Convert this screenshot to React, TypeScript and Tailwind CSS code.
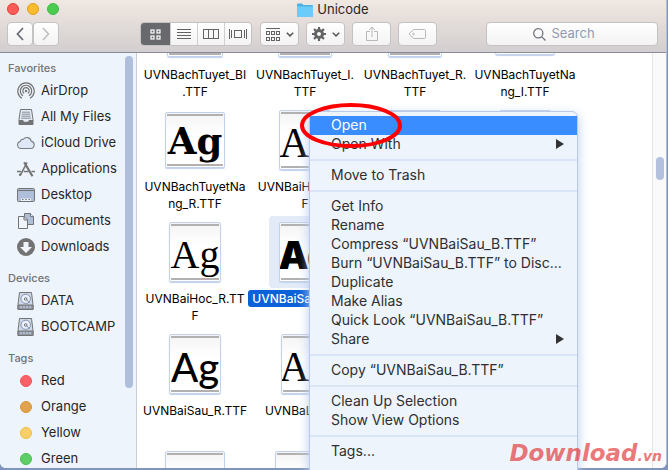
import { useState } from 'react'
import clsx from 'clsx'

interface SidebarEntry {
  label: string
  icon: React.ReactNode
}

interface FileEntry {
  id: string
  lines: string[]
  thumb: string
  glyph?: string
  selected?: boolean
}

interface MenuEntry {
  label: string
  submenu?: boolean
}

// ---------- Sidebar icons ----------

function AirDropIcon(): React.JSX.Element {
  return (
    <svg width="18" height="18" viewBox="0 0 18 18" fill="none" stroke="#737373" strokeWidth="1.2">
      <path d="M5 16.2a8.2 8.2 0 1 1 8 0" />
      <path d="M6 13.8a5.7 5.7 0 1 1 6 0" />
      <path d="M7.2 11.5a3.2 3.2 0 1 1 3.6 0" />
      <circle cx="9" cy="9" r="1.2" fill="#737373" stroke="none" />
    </svg>
  )
}

function AllFilesIcon(): React.JSX.Element {
  return (
    <svg width="18" height="18" viewBox="0 0 18 18">
      <path d="M3.5 1.5h11l1.500 10v5H2v-5z" fill="#e3ebf7" stroke="#737373" strokeWidth="1" />
      <path d="M5 4.2h8M4.7 6.2h8.6M4.4 8.2h9.2M4.1 10.2h9.8" stroke="#8a8e96" strokeWidth="1" />
      <path d="M2 12h4l1 1.8h4L12 12h4v4.8H2z" fill="#737373" />
    </svg>
  )
}

function CloudIcon(): React.JSX.Element {
  return (
    <svg width="18" height="18" viewBox="0 0 18 18">
      <path
        d="M4.1 14.500a3.600 3.600 0 0 1-.8-7.100 2.500 2.500 0 0 1 2.900-2.100A4.500 4.500 0 0 1 14.200 7.100a3.750 3.750 0 0 1-.4 7.400z"
        fill="#dfe8f7"
        stroke="#7b7f87"
        strokeWidth="1.1"
      />
    </svg>
  )
}

function ApplicationsIcon(): React.JSX.Element {
  return (
    <svg width="18" height="18" viewBox="0 0 18 18" fill="none" stroke="#737373">
      <path d="M10 2.500 3 15.800" strokeWidth="1.600" />
      <path d="M7.200 2.200 15.500 16.200" strokeWidth="2.200" />
      <path d="M0 11.500h4M6.800 11.500h4.800M14.500 11.500H18" strokeWidth="1.500" />
      <path d="M2.300 14.200l1.500 1" strokeWidth="2" />
    </svg>
  )
}

function DesktopIcon(): React.JSX.Element {
  return (
    <svg width="18" height="18" viewBox="0 0 18 18">
      <rect x=".5" y="2.500" width="17" height="13" rx="1" fill="#afbed9" stroke="#737373" />
      <path d="M1 4.500h16" stroke="#737373" />
      <path d="M4 15v-2.500h10V15" fill="#eef4fc" />
      <path d="M5 13.500h1.500M8.200 13.500h1.500M11.500 13.500H13" stroke="#737373" />
    </svg>
  )
}

function DocumentsIcon(): React.JSX.Element {
  return (
    <svg width="18" height="18" viewBox="0 0 18 18" stroke="#737373">
      <path d="M7.500 1.500h6l3 3v8h-9z" fill="#afbed9" />
      <path d="M13.500 1.500v3h3" fill="#eef4fc" />
      <path d="M1.500 4.500h5.500l3.500 3.500v8.500h-9z" fill="#eef4fc" />
      <path d="M7 4.500v3.500h3.500" fill="none" />
    </svg>
  )
}

function DownloadsIcon(): React.JSX.Element {
  return (
    <svg width="18" height="18" viewBox="0 0 18 18">
      <circle cx="9" cy="9" r="9" fill="#737373" />
      <path d="M6.500 4h5v5H15l-6 6-6-6h3.500z" fill="#f1f6fd" />
    </svg>
  )
}

function DriveIcon(): React.JSX.Element {
  return (
    <svg width="18" height="18" viewBox="0 0 18 18">
      <path d="M2.500.5h12l1.500 12v5H1v-5z" fill="#cdd8ea" stroke="#737373" />
      <ellipse cx="8.700" cy="6.800" rx="4.800" ry="4.600" fill="#e9f0fb" stroke="#8591a8" />
      <circle cx="8.700" cy="7" r="1.300" fill="none" stroke="#737373" />
      <path d="m9.500 7.500 3 3.500" stroke="#8591a8" />
      <path d="M1 13h15v4.500H1z" fill="#8f98a8" stroke="#737373" />
      <path d="M3.500 15h1M6.500 15h1M9.500 15h1M12.500 15h1" stroke="#eef4fc" strokeWidth="1.500" />
    </svg>
  )
}

const FAVORITES: SidebarEntry[] = [
  { label: 'AirDrop', icon: <AirDropIcon /> },
  { label: 'All My Files', icon: <AllFilesIcon /> },
  { label: 'iCloud Drive', icon: <CloudIcon /> },
  { label: 'Applications', icon: <ApplicationsIcon /> },
  { label: 'Desktop', icon: <DesktopIcon /> },
  { label: 'Documents', icon: <DocumentsIcon /> },
  { label: 'Downloads', icon: <DownloadsIcon /> }
]

const DEVICES: SidebarEntry[] = [
  { label: 'DATA', icon: <DriveIcon /> },
  { label: 'BOOTCAMP', icon: <DriveIcon /> }
]

const TAGS: SidebarEntry[] = [
  { label: 'Red', icon: <TagDot color="border-[#f4525a] bg-[#fc6168]" /> },
  { label: 'Orange', icon: <TagDot color="border-[#d9963a] bg-[#e0a24c]" /> },
  { label: 'Yellow', icon: <TagDot color="border-[#f0bd40] bg-[#f8d069]" /> },
  { label: 'Green', icon: <TagDot color="border-[#48bf50] bg-[#5fce66]" /> }
]

const FILE_ROWS: FileEntry[][] = [
  [
    {
      id: 'bachtuyet-bi',
      lines: ['UVNBachTuyet_BI', '.TTF'],
      thumb: 'h-[58px] w-[56px]',
      glyph: 'font-["DejaVu_Serif"] text-[34px] font-bold italic'
    },
    {
      id: 'bachtuyet-i',
      lines: ['UVNBachTuyet_I.', 'TTF'],
      thumb: 'h-[58px] w-[54px]',
      glyph: 'font-["DejaVu_Serif"] text-[34px] italic'
    },
    {
      id: 'bachtuyet-r',
      lines: ['UVNBachTuyet_R.', 'TTF'],
      thumb: 'h-[58px] w-[54px]',
      glyph: 'font-["DejaVu_Serif"] text-[34px] font-bold'
    },
    {
      id: 'bachtuyetnang-i',
      lines: ['UVNBachTuyetNa', 'ng_I.TTF'],
      thumb: 'h-[54px] w-[60px]',
      glyph: 'font-["DejaVu_Serif"] text-[34px] font-bold italic'
    }
  ],
  [
    {
      id: 'bachtuyetnang-r',
      lines: ['UVNBachTuyetNa', 'ng_R.TTF'],
      thumb: 'h-[56px] w-[60px]',
      glyph: 'font-["DejaVu_Serif"] text-[37px] font-bold'
    },
    {
      id: 'baihoc-b',
      lines: ['UVNBaiHoc_I.TT', 'F'],
      thumb: 'h-[60px] w-[52px]',
      glyph: 'font-["Liberation_Serif"] text-[42px]'
    },
    { id: 'baihoc-bi', lines: [], thumb: 'h-[60px] w-[52px]' },
    { id: 'baihoc-i', lines: [], thumb: 'h-[60px] w-[52px]' }
  ],
  [
    {
      id: 'baihoc-r',
      lines: ['UVNBaiHoc_R.TT', 'F'],
      thumb: 'h-[60px] w-[52px]',
      glyph: 'font-["Liberation_Serif"] text-[40px]'
    },
    {
      id: 'baisau-b',
      lines: ['UVNBaiSau_B.TTF'],
      thumb: 'h-[60px] w-[52px]',
      glyph: 'font-["Inter"] text-[38px] font-black',
      selected: true
    }
  ],
  [
    {
      id: 'baisau-r',
      lines: ['UVNBaiSau_R.TTF'],
      thumb: 'h-[60px] w-[52px]',
      glyph: 'font-["Lato"] text-[40px] font-medium'
    },
    {
      id: 'bale-r',
      lines: ['UVNBaLe.TTF'],
      thumb: 'h-[60px] w-[48px]',
      glyph: 'font-["Liberation_Serif"] text-[42px]'
    }
  ],
  [
    { id: 'next-1', lines: [], thumb: 'h-[50px] w-[60px]' },
    { id: 'next-2', lines: [], thumb: 'h-[50px] w-[60px]' }
  ]
]

const MENU: MenuEntry[][] = [
  [{ label: 'Open' }, { label: 'Open With', submenu: true }],
  [{ label: 'Move to Trash' }],
  [
    { label: 'Get Info' },
    { label: 'Rename' },
    { label: 'Compress “UVNBaiSau_B.TTF”' },
    { label: 'Burn “UVNBaiSau_B.TTF” to Disc...' },
    { label: 'Duplicate' },
    { label: 'Make Alias' },
    { label: 'Quick Look “UVNBaiSau_B.TTF”' },
    { label: 'Share', submenu: true }
  ],
  [{ label: 'Copy “UVNBaiSau_B.TTF”' }],
  [{ label: 'Clean Up Selection' }, { label: 'Show View Options' }],
  [{ label: 'Tags...' }]
]

export default function App(): React.JSX.Element {
  return (
    <div className="relative h-screen overflow-hidden bg-[#8095bb] pr-px pb-[2px] font-[Inter,sans-serif] text-[#262626]">
      <div className="flex h-full flex-col overflow-hidden rounded-b-md border-r border-[#a9bfe6] bg-white">
        <TitleBar />
        <div className="flex min-h-0 flex-1">
          <Sidebar />
          <FileGrid />
          <div className="w-[14px] shrink-0 border-l border-[#e6e6e6] bg-[#fafafa] pt-[104px] pl-[3px]">
            <div className="h-[23px] w-2 rounded-full bg-[#b4c1de]" />
          </div>
        </div>
      </div>
      <ContextMenu />
      <svg
        className="pointer-events-none absolute top-[101px] left-[298px]"
        width="106"
        height="50"
        viewBox="0 0 106 50"
        fill="none"
      >
        <ellipse cx="53" cy="24.500" rx="49" ry="20.500" stroke="#fe0000" strokeWidth="4" />
      </svg>
      <div className="absolute right-[6px] bottom-0 font-['DejaVu_Sans',sans-serif] text-[23px] leading-7 font-bold text-[#e02a2a]/65 italic">
        Download<span className="text-[14px]">.vn</span>
      </div>
    </div>
  )
}

// ---------- Title bar ----------

const BUTTON =
  'flex h-6 items-center justify-center rounded-[4px] border border-[#c3c3c6] bg-linear-to-b from-white to-[#f3f3f4]'

function TitleBar(): React.JSX.Element {
  return (
    <header className="h-[53px] shrink-0 border-b border-[#898d99] bg-linear-to-b from-[#f0e8e1] to-[#d3cecf]">
      <div className="grid h-[22px] grid-cols-[1fr_auto_1fr] px-[7px]">
        <div className="flex gap-2 pt-[3px]">
          <button
            type="button"
            aria-label="Close"
            className="size-3 rounded-full border border-[#e0443e] bg-[#fc5b57]"
          />
          <button
            type="button"
            aria-label="Minimize"
            className="size-3 rounded-full border border-[#dfa023] bg-[#fdbc2e]"
          />
          <button
            type="button"
            aria-label="Zoom"
            className="size-3 rounded-full border border-[#3fbd46] bg-[#4ccb50]"
          />
        </div>
        <h1 className="flex h-[19px] items-center gap-1 text-[13px] text-[#2b2626]">
          <svg width="16" height="14" viewBox="0 0 16 14">
            <path d="M0 1.500Q0 .5 1 .5h4l1.500 1.500H15q1 0 1 1V13q0 1-1 1H1q-1 0-1-1z" fill="#4fb0e0" />
            <path d="M0 3.500h16V13q0 1-1 1H1q-1 0-1-1z" fill="#6ccbf8" />
          </svg>
          Unicode
        </h1>
      </div>
      <div className="flex items-center pr-2 pl-[7px]">
        <button type="button" aria-label="Back" className={clsx(BUTTON, 'w-[26px]')}>
          <svg width="8" height="14" viewBox="0 0 8 14" fill="none" stroke="#6b6e78" strokeWidth="1.800">
            <path d="M7 1 1.500 7 7 13" />
          </svg>
        </button>
        <button type="button" aria-label="Forward" className={clsx(BUTTON, 'w-[26px]')}>
          <svg width="8" height="14" viewBox="0 0 8 14" fill="none" stroke="#bdbdc0" strokeWidth="1.500">
            <path d="M1 1l5.500 6L1 13" />
          </svg>
        </button>
        <ViewSwitcher />
        <div className="ml-2 flex gap-[7px]">
          <button type="button" aria-label="Arrange" className={clsx(BUTTON, 'w-[39px] gap-[6px]')}>
            <svg width="14" height="13" viewBox="0 0 14 13" fill="none" stroke="#636363">
              <path d="M0 .5h14" />
              <rect x=".5" y="3.500" width="3" height="3" />
              <rect x="5.500" y="3.500" width="3" height="3" />
              <rect x="10.500" y="3.500" width="3" height="3" />
              <rect x=".5" y="9.500" width="3" height="3" />
              <rect x="5.500" y="9.500" width="3" height="3" />
              <rect x="10.500" y="9.500" width="3" height="3" />
            </svg>
            <Caret />
          </button>
          <button type="button" aria-label="Action" className={clsx(BUTTON, 'w-[39px] gap-[6px]')}>
            <svg width="14" height="14" viewBox="0 0 14 14" fill="none" stroke="#636363">
              <circle cx="7" cy="7" r="3.500" strokeWidth="3" />
              <path
                d="M7 0v3M7 11v3M0 7h3M11 7h3M2.050 2.050l2.100 2.100M9.850 9.850l2.100 2.100M2.050 11.950l2.100-2.100M9.850 4.150l2.100-2.100"
                strokeWidth="2.200"
              />
            </svg>
            <Caret />
          </button>
          <button type="button" aria-label="Share" className={clsx(BUTTON, 'w-[39px]')}>
            <svg width="12" height="16" viewBox="0 0 12 16" fill="none" stroke="#b9b9bb">
              <path d="M4 5.500H.5v9h11v-9H8M6 11V1M3 4l3-3 3 3" />
            </svg>
          </button>
          <button type="button" aria-label="Edit tags" className={clsx(BUTTON, 'w-[39px]')}>
            <svg width="17" height="10" viewBox="0 0 17 10" fill="none" stroke="#b9b9bb">
              <path d="M5 .5h10.500q1 0 1 1v7q0 1-1 1H5L.8 6.200q-1-1.200 0-2.400z" />
              <circle cx="4.500" cy="5" r=".8" />
            </svg>
          </button>
        </div>
        <label className={clsx(BUTTON, 'ml-auto w-[172px] gap-[6px]')}>
          <svg width="13" height="13" viewBox="0 0 13 13" fill="none" stroke="#6b6e78" strokeWidth="1.200">
            <circle cx="5.300" cy="5.300" r="4.600" />
            <path d="m8.600 8.600 3.900 3.900" />
          </svg>
          <input
            type="text"
            aria-label="Search"
            placeholder="Search"
            className="w-[60px] bg-transparent text-[13px] outline-none placeholder:text-[#8f9bb0]"
          />
        </label>
      </div>
    </header>
  )
}

function Caret(): React.JSX.Element {
  return (
    <svg width="8" height="5" viewBox="0 0 8 5" fill="none" stroke="#5c5c5c" strokeWidth="1.600">
      <path d="M.8.7 4 3.900 7.200.7" />
    </svg>
  )
}

function ViewSwitcher(): React.JSX.Element {
  const cell = 'flex w-[27px] items-center justify-center border-l border-[#cfcfd1]'
  return (
    <div className="ml-[81px] flex h-6 overflow-hidden rounded-[4px] border border-[#c3c3c6] bg-linear-to-b from-white to-[#f3f3f4]">
      <button
        type="button"
        aria-label="Icon view"
        className="flex w-[29px] items-center justify-center bg-[#68696c]"
      >
        <svg width="11" height="11" viewBox="0 0 11 11" fill="none" stroke="#fff" strokeWidth="1.200">
          <rect x="1" y="1" width="3" height="3" />
          <rect x="7" y="1" width="3" height="3" />
          <rect x="1" y="7" width="3" height="3" />
          <rect x="7" y="7" width="3" height="3" />
        </svg>
      </button>
      <button type="button" aria-label="List view" className={cell}>
        <svg width="14" height="10" viewBox="0 0 14 10" stroke="#636363">
          <path d="M0 .5h14M0 3.500h14M0 6.500h14M0 9.500h14" />
        </svg>
      </button>
      <button type="button" aria-label="Column view" className={cell}>
        <svg width="16" height="10" viewBox="0 0 16 10" fill="none" stroke="#636363">
          <rect x=".5" y=".5" width="15" height="9" />
          <path d="M5.500 0v10M10.500 0v10" />
        </svg>
      </button>
      <button type="button" aria-label="Cover flow view" className={cell}>
        <svg width="18" height="10" viewBox="0 0 18 10" fill="none" stroke="#636363">
          <path d="M.5 0v10M2.500 1v8M15.500 1v8M17.500 0v10" />
          <rect x="5.500" y="1.500" width="7" height="7" />
        </svg>
      </button>
    </div>
  )
}

// ---------- Sidebar ----------

function TagDot({ color }: { color: string }): React.JSX.Element {
  return <span className={clsx('mx-[3px] size-3 rounded-full border', color)} />
}

function Sidebar(): React.JSX.Element {
  return (
    <aside className="flex w-[137px] shrink-0 border-r border-[#c9ced6] bg-[#eef4fc]">
      <nav className="flex min-w-0 flex-1 flex-col gap-2 pt-[5px]">
        <SidebarSection title="Favorites" entries={FAVORITES} />
        <SidebarSection title="Devices" entries={DEVICES} />
        <SidebarSection title="Tags" entries={TAGS} />
      </nav>
      <div className="mt-[3px] mr-[3px] h-[332px] w-2 shrink-0 rounded-full bg-[#afbedc]" />
    </aside>
  )
}

function SidebarSection({
  title,
  entries
}: {
  title: string
  entries: SidebarEntry[]
}): React.JSX.Element {
  return (
    <section>
      <h2 className="pl-2 text-[11px] leading-5 font-medium text-[#6f7278]">{title}</h2>
      <ul>
        {entries.map((entry) => (
          <li key={entry.label}>
            <a href="#" className="flex h-[26px] items-center gap-[6px] pl-[17px] text-[13px] whitespace-nowrap">
              {entry.icon}
              {entry.label}
            </a>
          </li>
        ))}
      </ul>
    </section>
  )
}

// ---------- File grid ----------

function FileGrid(): React.JSX.Element {
  return (
    <main className="min-w-0 flex-1 overflow-hidden pl-[3px]">
      {/* scrolled part way down, so the first row is cut by the title bar */}
      <div className="-mt-[61px]">
        {FILE_ROWS.map((row) => (
          <div key={row[0].id} className="grid h-[112px] grid-cols-[repeat(4,110px)]">
            {row.map((file) => (
              <FileItem key={file.id} file={file} />
            ))}
          </div>
        ))}
      </div>
    </main>
  )
}

function FileItem({ file }: { file: FileEntry }): React.JSX.Element {
  return (
    <figure className="flex flex-col items-center gap-[2px]">
      <div
        className={clsx(
          'flex size-[72px] shrink-0 items-center justify-center rounded-[4px]',
          file.selected && 'bg-[#e3ebf9]'
        )}
      >
        <div
          className={clsx(
            'flex flex-col overflow-hidden rounded-[2px] border border-[#c3d2ec] bg-linear-to-b from-[#f4f4f4] to-white to-40% p-px shadow-[0_1px_1px_#c3d2ec]',
            file.thumb
          )}
        >
          <div className="h-[2px] shrink-0 bg-[#b3b0b0]" />
          <div className="flex min-h-0 flex-1 items-end justify-center text-black">
            {file.glyph && <span className={clsx('leading-[46px]', file.glyph)}>Ag</span>}
          </div>
          <div className="h-[2px] shrink-0 bg-[#b3b0b0]" />
        </div>
      </div>
      <figcaption
        className={clsx(
          'rounded-[3px] px-1 text-center text-[12px] leading-[17px] whitespace-nowrap',
          file.selected ? 'bg-[#0a61d8] font-medium text-white' : 'text-black'
        )}
      >
        {file.lines.map((line) => (
          <span key={line} className="block">
            {line}
          </span>
        ))}
      </figcaption>
    </figure>
  )
}

// ---------- Context menu ----------

function ContextMenu(): React.JSX.Element {
  const [active, setActive] = useState('Open')

  return (
    <div
      role="menu"
      className="absolute top-[111px] -bottom-2 left-[309px] w-[269px] rounded-md border border-[#b9cbe8] bg-[#eef4fc] pt-1 shadow-[0_4px_12px_#b9cbef]"
    >
      {MENU.map((group, i) => (
        <div key={i}>
          {i > 0 && <div className="my-[5px] h-[2px] bg-[#d9e4f6]" />}
          {group.map((item) => (
            <button
              key={item.label}
              type="button"
              role="menuitem"
              onMouseEnter={() => setActive(item.label)}
              className={clsx(
                'flex h-[19px] w-full items-center justify-between pr-[13px] pb-[2px] pl-[21px] text-[14px] whitespace-nowrap',
                active === item.label ? 'bg-[#398dfe] text-white' : 'text-[#2f2f31]'
              )}
            >
              {item.label}
              {item.submenu && (
                <svg width="8" height="10" viewBox="0 0 8 10" fill="#333">
                  <path d="M0 0l8 5-8 5z" />
                </svg>
              )}
            </button>
          ))}
        </div>
      ))}
    </div>
  )
}
